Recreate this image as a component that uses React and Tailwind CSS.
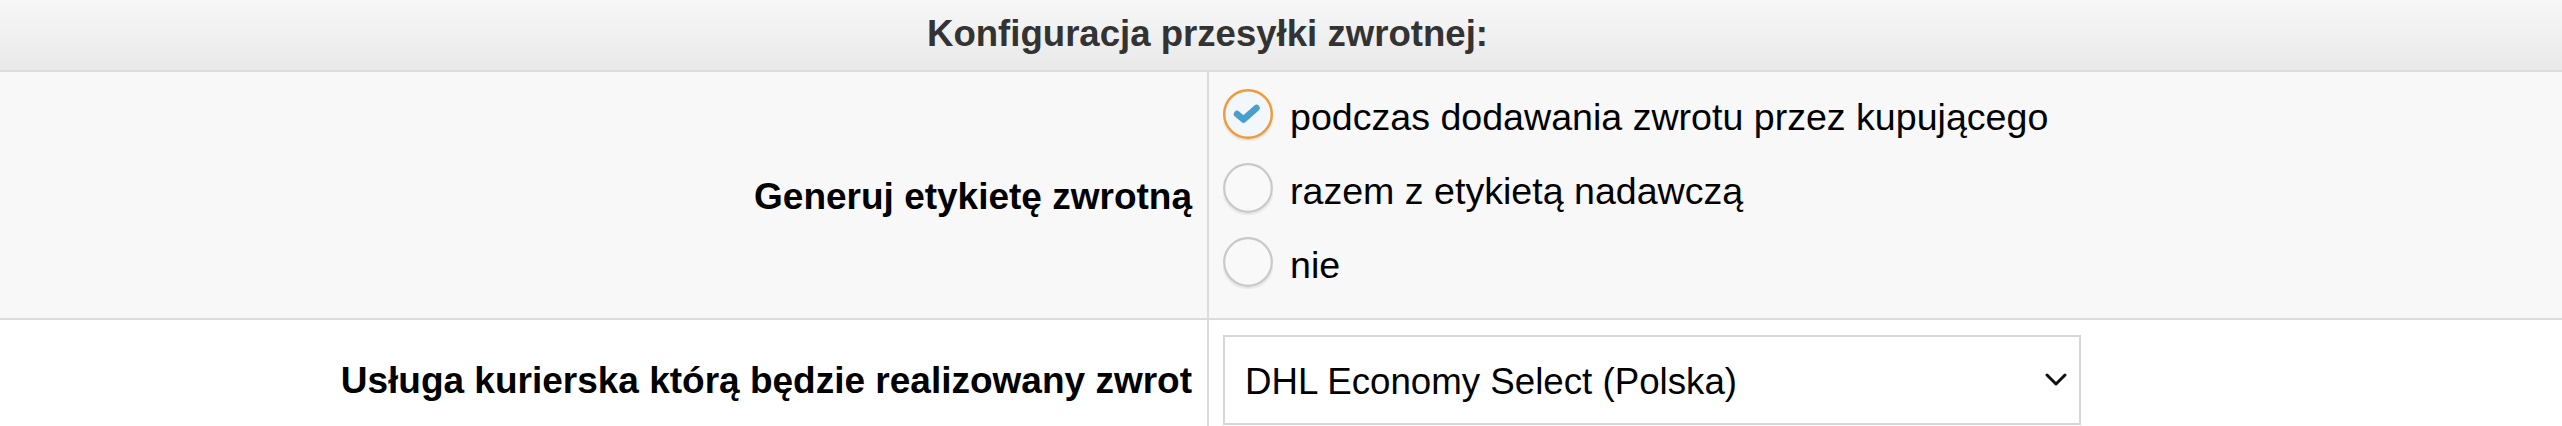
import React from "react";

function RadioChecked() {
  return (
    <svg width="50" height="52" viewBox="0 0 50 52" className="shrink-0">
      <defs>
        <filter id="sh1" x="-20%" y="-20%" width="140%" height="140%">
          <feDropShadow dx="0" dy="1.5" stdDeviation="1" floodColor="#000" floodOpacity="0.12" />
        </filter>
      </defs>
      <circle cx="25" cy="25" r="23.8" fill="#f2f7fc" stroke="#ef9a3a" strokeWidth="2.4" filter="url(#sh1)" />
      <polyline points="14,25 20.5,30.5 33.5,19" fill="none" stroke="#4aa0cc" strokeWidth="6.5" strokeLinecap="round" strokeLinejoin="round" />
    </svg>
  );
}

function RadioEmpty({ id }) {
  return (
    <svg width="50" height="52" viewBox="0 0 50 52" className="shrink-0">
      <defs>
        <filter id={id} x="-20%" y="-20%" width="140%" height="140%">
          <feDropShadow dx="0" dy="1.5" stdDeviation="1.2" floodColor="#000" floodOpacity="0.12" />
        </filter>
      </defs>
      <circle cx="25" cy="25" r="23.8" fill="#f9f9f9" stroke="#c9c9c9" strokeWidth="2.2" filter={`url(#${id})`} />
    </svg>
  );
}

export default function App() {
  return (
    <div className="w-[2562px] font-['Liberation_Sans',Arial,sans-serif] text-black">
      <div className="h-[72px] border-b-2 border-[#dcdcdc] bg-gradient-to-b from-[#f7f7f7] to-[#e9e9e9] flex items-center justify-center pr-[147px] pb-[1px] text-[36.6px] font-bold text-[#333]">
        Konfiguracja przesyłki zwrotnej:
      </div>

      <div className="grid grid-cols-[1209px_1fr] bg-[#f8f8f8] border-b-2 border-[#dcdcdc]">
        <div className="flex items-center justify-end pr-[15px] pt-[3px] border-r-2 border-[#dcdcdc] text-[37px] font-bold">
          Generuj etykietę zwrotną
        </div>
        <div className="flex flex-col pl-[14px] pt-[6px] pb-[18px] text-[37.6px]">
          <div className="h-[74px] flex items-center gap-[17px]">
            <RadioChecked />
            <span className="pt-[4px]">podczas dodawania zwrotu przez kupującego</span>
          </div>
          <div className="h-[74px] flex items-center gap-[17px]">
            <RadioEmpty id="sh2" />
            <span className="pt-[4px]">razem z etykietą nadawczą</span>
          </div>
          <div className="h-[74px] flex items-center gap-[17px]">
            <RadioEmpty id="sh3" />
            <span className="pt-[4px]">nie</span>
          </div>
        </div>
      </div>

      <div className="grid grid-cols-[1209px_1fr] bg-white">
        <div className="flex items-center justify-end pr-[15px] pt-[3px] border-r-2 border-[#dcdcdc] text-[37px] font-bold">
          Usługa kurierska którą będzie realizowany zwrot
        </div>
        <div className="pl-[14px] pt-[15px] pb-[14px]">
          <div className="w-[858px] h-[90px] border-2 border-[#d6d6d6] bg-white flex items-center justify-between pl-[20px] pr-[12px] text-[36.7px]">
            <span className="pt-[3px]">DHL Economy Select (Polska)</span>
            <svg width="22" height="14" viewBox="0 0 22 14">
              <polyline points="2,2 11,11 20,2" fill="none" stroke="#111" strokeWidth="3" strokeLinecap="round" strokeLinejoin="round" />
            </svg>
          </div>
        </div>
      </div>
    </div>
  );
}
